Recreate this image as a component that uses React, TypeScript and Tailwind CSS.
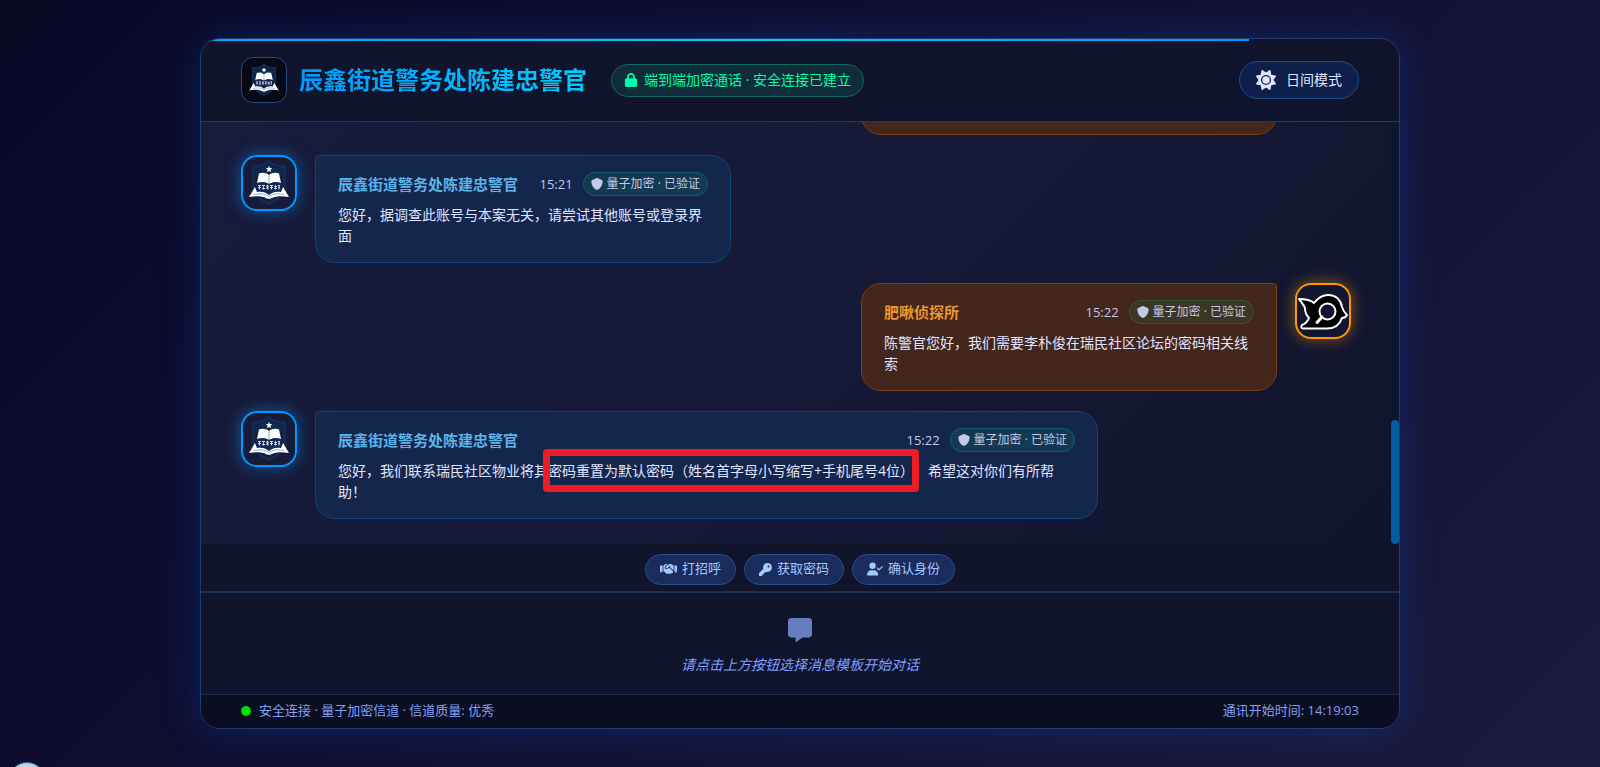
import type { ReactNode } from "react";
import {
	FaHandshake,
	FaKey,
	FaLock,
	FaMessage,
	FaShield,
	FaSun,
	FaUserCheck,
} from "react-icons/fa6";

const OFFICER = "辰鑫街道警务处陈建忠警官";
const AGENCY = "肥啾侦探所";

const templates = [
	{ label: "打招呼", Icon: FaHandshake, size: "w-[17px] h-[14px]" },
	{ label: "获取密码", Icon: FaKey, size: "w-[13px] h-[13px]" },
	{ label: "确认身份", Icon: FaUserCheck, size: "w-4 h-[14px]" },
];

function PoliceLogo({ className }: { className?: string }) {
	return (
		<svg viewBox="0 0 52 52" className={className} aria-hidden="true">
			<path
				d="M26 4c5 4 10 5 16 5v21c0 8-7 13-16 17-9-4-16-9-16-17V9c6 0 11-1 16-5z"
				fill="#12284f"
				stroke="#1b345f"
				strokeWidth="1"
			/>
			<path
				d="M26 7c4 3 8 4 13 5v18c0 7-6 11-13 14-7-3-13-7-13-14V12c5-1 9-2 13-5z"
				fill="none"
				stroke="#0d1f40"
				strokeWidth="1"
			/>
			<path
				d="M26 9l.9 2.100 2.300.2-1.700 1.500.5 2.300-2-1.200-2 1.200.5-2.300-1.700-1.500 2.300-.2z"
				fill="#fff"
			/>
			<path d="M26 18c-3-2.500-7-3-10-1.500L14 26c4-1.500 9-1 12 1 3-2 8-2.500 12-1l-2-9.500C33 15 29 15.500 26 18z" fill="#fff" />
			<path d="M26 18v8" stroke="#9aa6c4" strokeWidth="1" />
			<path d="M14 26c4-1 9-1 12 1 3-2 8-2 12-1v8H14z" fill="#17284f" />
			<g stroke="#c8d3ea" strokeWidth="1" fill="none">
				<path d="M15 28.500h3M15 30.500h3M16.500 28v4.500M19 28.500h3M19 31.500h3M20.500 28v4.500M23 29h3M23 31h3M24.500 28v4.500M27 28.500h3M27 30.500h3M28.500 28v4.500M31 29.500h3M31 31.500h3M32.500 28v4.500M35 28.500h2M35 30.500h2M36 28v4.500" />
			</g>
			<path
				d="M26 38c-3-3-8-4-12-3l-2-5-6 10c7-1 13-1 17 1 1 1 5 1 6 0 4-2 10-2 17-1l-6-10-2 5c-4-1-9 0-12 3z"
				fill="#fff"
			/>
			<path
				d="M26 39.500c-4-3-9-3-15-2M26 39.500c4-3 9-3 15-2"
				fill="none"
				stroke="#9aa6c4"
				strokeWidth="1"
			/>
		</svg>
	);
}

function BirdLogo() {
	return (
		<svg viewBox="0 0 52 52" className="w-full h-full" aria-hidden="true">
			<path
				d="M2 14c5 0 10 0 15 4 4-5 8-8 14-8 8 0 13 5 14 12 1 4 3 6 5 8-1 2-3 3-5 3-2 6-7 10.500-15 10.500H6c-2 0-2-2-1-3.500 3-1 5-2 7-7-3-3-4-6-4-10-1-3-3-5-6-9z"
				fill="#000"
				stroke="#fff"
				strokeWidth="2"
				strokeLinejoin="round"
			/>
			<circle cx="30.500" cy="26.500" r="8" fill="#10142e" stroke="#fff" strokeWidth="2" />
			<path d="M25 32l-5 5.500" stroke="#fff" strokeWidth="3" strokeLinecap="round" />
		</svg>
	);
}

type MessageProps = {
	name: string;
	time: string;
	own?: boolean;
	wide?: boolean;
	children: ReactNode;
};

function Message({ name, time, own, wide, children }: MessageProps) {
	return (
		<div className={`flex shrink-0 items-start gap-[18px] ${own ? "flex-row-reverse" : ""}`}>
			<div
				className={`w-14 h-14 shrink-0 rounded-2xl border-2 overflow-hidden ${
					own
						? "border-[#ff9900] shadow-[0_0_15px_rgba(255,153,0,0.5)]"
						: "border-[#0099ff] shadow-[0_0_15px_rgba(0,153,255,0.5)]"
				}`}
			>
				{own ? <BirdLogo /> : <PoliceLogo className="w-full h-full" />}
			</div>
			<div
				className={`rounded-[20px] border px-[22px] py-4 ${wide ? "w-[783px]" : "w-[416px]"} ${
					own
						? "rounded-tr-sm bg-[#43261c] border-[#7a4314]"
						: "rounded-tl-sm bg-[#15264c] border-[#11447b]"
				}`}
			>
				<div className="flex items-center justify-between mb-2">
					<span className={`text-[15px] leading-6 font-bold ${own ? "text-[#e8962e]" : "text-[#5cb3e8]"}`}>
						{name}
					</span>
					<div className="flex items-center gap-[10px] text-[#c5c8e8]">
						<span className="text-[13px] leading-6">{time}</span>
						<span
							className={`h-6 flex items-center gap-1 rounded-xl border px-[7px] text-xs ${
								own ? "bg-[#3c3626] border-[#2e5a3c]" : "bg-[#133a52] border-[#125e66]"
							}`}
						>
							<FaShield />
							量子加密 · 已验证
						</span>
					</div>
				</div>
				<p className="text-sm leading-[21px] text-[#e0e4ff] [text-spacing-trim:space-all]">{children}</p>
			</div>
		</div>
	);
}

export default function App() {
	return (
		<div className="relative min-h-screen overflow-hidden flex items-center justify-center bg-linear-135 from-[#090926] via-[#111034] to-[#1c1a3e] font-['Open_Sans','Noto_Sans_CJK_SC',sans-serif]">
			<main className="relative w-full max-w-[1200px] h-[90vh] flex flex-col rounded-[20px] border border-[#203c6b] overflow-hidden bg-[#10142c] shadow-[0_0_40px_rgba(0,110,255,0.24)]">
				<div className="absolute top-0 left-0 w-7/8 h-[2px] bg-linear-to-r from-[#00a2ff] via-[#00ccff] to-[#0099ff]" />

				<header className="shrink-0 flex items-center justify-between px-10 py-[18px] border-b border-[#203a66]">
					<div className="flex items-center">
						<div className="w-[46px] h-[46px] rounded-xl border border-[#234a7c] bg-[#060914] p-[3px]">
							<PoliceLogo className="w-full h-full" />
						</div>
						<h1 className="ml-3 text-2xl font-bold bg-linear-to-r from-[#0099ff] to-[#00ccff] bg-clip-text text-transparent">
							{OFFICER}
						</h1>
						<div className="ml-6 h-[33px] flex items-center gap-[6px] rounded-full border border-[#0d6a5c] bg-[#102b3a] px-3 text-sm text-[#00ffaa]">
							<FaLock />
							端到端加密通话 · 安全连接已建立
						</div>
					</div>
					<button className="h-[38px] flex items-center gap-[10px] rounded-full border border-[#1e4a88] bg-[#0e2049] px-4 text-sm text-[#e0e4ff]">
						<FaSun className="w-5 h-5" />
						日间模式
					</button>
				</header>

				<section className="flex-1 min-h-0 flex bg-linear-135 from-[#171c3c] via-[#161a38] to-[#10142c]">
					<div className="flex-1 flex flex-col justify-end gap-5 overflow-hidden px-10 pb-[25px]">
						{/* older message, scrolled out except for its lower edge */}
						<div className="shrink-0 self-end mr-[74px] w-[416px] h-[108px] rounded-[20px] border border-[#7a4314] bg-[#43261c]" />
						<Message name={OFFICER} time="15:21">
							您好，据调查此账号与本案无关，请尝试其他账号或登录界面
						</Message>
						<Message name={AGENCY} time="15:22" own>
							陈警官您好，我们需要李朴俊在瑞民社区论坛的密码相关线索
						</Message>
						<Message name={OFFICER} time="15:22" wide>
							您好，我们联系瑞民社区物业将其
							<span className="relative">
								密码重置为默认密码（姓名首字母小写缩写+手机尾号4位）
								<span className="absolute -inset-x-[5px] -inset-y-3 rounded-sm border-7 border-[#ed1c24]" />
							</span>
							，希望这对你们有所帮助！
						</Message>
					</div>
					<div className="w-2 flex flex-col justify-end bg-[#0c1832]">
						<div className="h-[124px] rounded bg-[#055c9c]" />
					</div>
				</section>

				<nav className="shrink-0 flex justify-center gap-2 pt-[10px] pb-[6px] bg-[#11152c]">
					{templates.map(({ label, Icon, size }) => (
						<button
							key={label}
							className="h-[31px] flex items-center gap-[5px] rounded-full border border-[#264f8c] bg-[#1a2c5c] px-[14px] text-[13px] text-[#a6c8ff]"
						>
							<Icon className={size} />
							{label}
						</button>
					))}
				</nav>

				<div className="shrink-0 h-[103px] flex flex-col items-center gap-3 border-t-2 border-[#1b2f58] pt-[25px]">
					<FaMessage className="w-6 h-6 text-[#667dc0]" />
					<p className="text-sm leading-[21px] italic text-[#809fff]">请点击上方按钮选择消息模板开始对话</p>
				</div>

				<footer className="shrink-0 h-[34px] flex items-center justify-between border-t border-[#1a2f54] bg-[#0a0e20] px-10 text-[13px] text-[#80a0f8]">
					<div className="flex items-center gap-2">
						<span className="w-[10px] h-[10px] rounded-full bg-[#00dd00]" />
						安全连接 · 量子加密信道 · 信道质量: 优秀
					</div>
					<span>通讯开始时间: 14:19:03</span>
				</footer>
			</main>

			<div className="absolute left-[9px] -bottom-[31px] w-9 h-9 rounded-full border border-[#1b6a9c] bg-[#c4d2dc]" />
		</div>
	);
}
